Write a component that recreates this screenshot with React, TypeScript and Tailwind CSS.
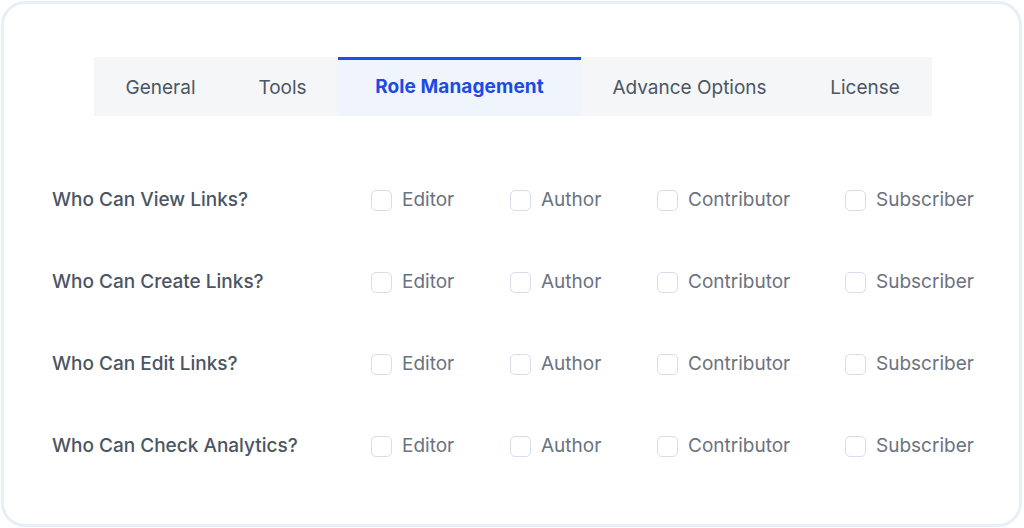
const tabs = [
  { name: "General", w: "w-[133px]" },
  { name: "Tools", w: "w-[111px]" },
  { name: "Role Management", w: "w-[243px]" },
  { name: "Advance Options", w: "w-[217px]" },
  { name: "License", w: "w-[134px]" },
];
const active = "Role Management";

const rows = [
  "Who Can View Links?",
  "Who Can Create Links?",
  "Who Can Edit Links?",
  "Who Can Check Analytics?",
];

const roles = [
  { name: "Editor", w: "w-[139px]" },
  { name: "Author", w: "w-[147px]" },
  { name: "Contributor", w: "w-[188px]" },
  { name: "Subscriber", w: "w-[140px]" },
];

function Checkbox({ label, w }: { label: string; w: string }) {
  return (
    <label className={`flex shrink-0 items-center gap-[10px] cursor-pointer ${w}`}>
      <span className="block h-[21px] w-[21px] shrink-0 rounded-[5px] border border-[#d9dcea] bg-white" />
      <span className="text-[19px] text-[#6b7280]">{label}</span>
    </label>
  );
}

export default function App() {
  return (
    <div className="h-[528px] w-[1024px] bg-white p-px font-['Inter',sans-serif]">
      <div className="h-[526px] w-[1021px] rounded-[24px] border-[3px] border-[#e9eef9] bg-white pt-[53px]">
        {/* Tabs */}
        <div className="ml-[90px] flex h-[59px] w-[838px] bg-[#f5f6f8]">
          {tabs.map((t) =>
            t.name === active ? (
              <div
                key={t.name}
                className={`flex items-center justify-center border-t-[3px] border-[#1d4fe0] bg-[#eff4fd] pb-[1px] text-[19px] font-bold tracking-[0.1px] text-[#1a4be3] ${t.w}`}
              >
                {t.name}
              </div>
            ) : (
              <div key={t.name} className={`flex items-center justify-center pt-[4px] text-[19px] text-[#4b5563] ${t.w}`}>
                {t.name}
              </div>
            )
          )}
        </div>

        {/* Role rows */}
        <div className="mt-[43px] pl-[48px]">
          {rows.map((r) => (
            <div key={r} className="flex h-[82px] items-center">
              <div className="w-[319px] shrink-0 text-[19px] font-medium text-[#4b5563]">{r}</div>
              <div className="flex">
                {roles.map((role) => (
                  <Checkbox key={role.name} label={role.name} w={role.w} />
                ))}
              </div>
            </div>
          ))}
        </div>
      </div>
    </div>
  );
}
